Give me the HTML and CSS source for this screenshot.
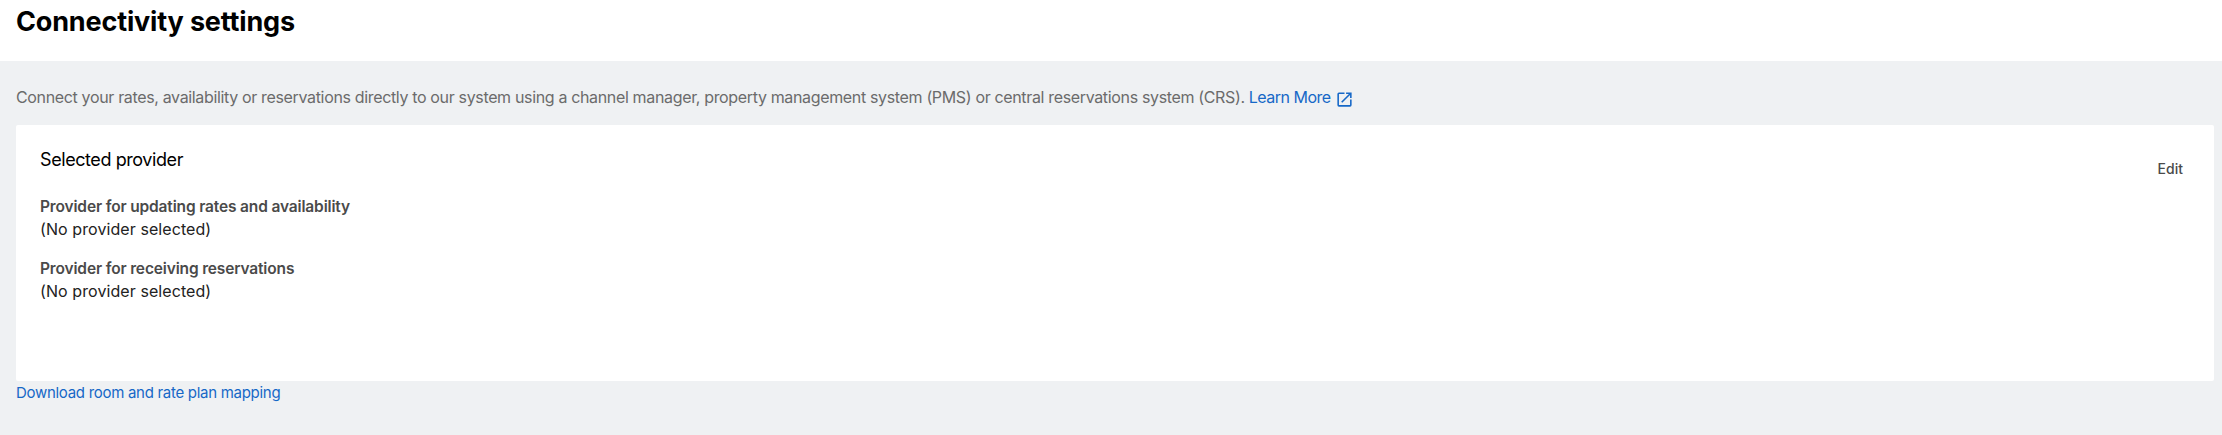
FILE: index.html
```html
<!DOCTYPE html>
<html lang="en">
<head>
    <meta charset="UTF-8">
    <meta name="viewport" content="width=device-width, initial-scale=1.0">
    <title>Connectivity settings</title>
    <link rel="stylesheet" href="styles.css">
</head>
<body>
    <header class="page-header">
        <h1>Connectivity settings</h1>
    </header>
    <main class="content">
        <p class="intro"><span class="intro-text">Connect your rates, availability or reservations directly to our system using a channel manager, property management system (PMS) or central reservations system (CRS).</span>
            <a class="learn-more" href="#">Learn More<svg class="icon" viewBox="0 0 24 24"><path fill="currentColor" d="M19 19H5V5h7V3H5a2 2 0 0 0-2 2v14a2 2 0 0 0 2 2h14a2 2 0 0 0 2-2v-7h-2v7zM14 3v2h3.59l-9.83 9.83 1.41 1.41L19 6.41V10h2V3h-7z"/></svg></a>
        </p>
        <section class="card">
            <div class="card-body">
                <h2>Selected provider</h2>
                <div class="provider">
                    <h3>Provider for updating rates and availability</h3>
                    <p>(No provider selected)</p>
                </div>
                <div class="provider">
                    <h3>Provider for receiving reservations</h3>
                    <p>(No provider selected)</p>
                </div>
            </div>
            <button class="edit">Edit</button>
        </section>
        <a class="download" href="#">Download room and rate plan mapping</a>
    </main>
</body>
</html>
```
FILE: styles.css
```css
* {
    box-sizing: border-box;
}
body {
    margin: 0;
    height: 435px;
    background: #eff1f3;
    font-family: Inter, sans-serif;
    color: #222;
    overflow: hidden;
}
h1, h2, h3, p {
    margin: 0;
}
a {
    color: #1668c7;
    text-decoration: none;
}
.page-header {
    height: 61px;
    padding: 5px 16px;
    background: #fff;
}
h1 {
    font-size: 27px;
    line-height: 34px;
    font-weight: 700;
    letter-spacing: -0.16px;
    color: #000;
}
.content {
    padding: 24px 8px 0 16px;
}
.intro {
    display: flex;
    gap: 4px;
    height: 40px;
    font-size: 16px;
    line-height: 24px;
    letter-spacing: -0.346px;
    color: #6b6b6b;
    white-space: nowrap;
}
.learn-more {
    display: flex;
    letter-spacing: -0.5px;
}
.icon {
    width: 19px;
    height: 19px;
    margin: 5px 0 0 4px;
}
.card {
    display: flex;
    justify-content: space-between;
    align-items: flex-start;
    height: 256px;
    padding: 24px;
    background: #fff;
    border-radius: 2px;
}
h2 {
    margin-bottom: 25px;
    font-size: 18px;
    line-height: 22px;
    font-weight: 400;
    letter-spacing: -0.42px;
    color: #000;
}
.provider {
    margin-bottom: 18px;
    font-size: 16px;
    line-height: 22px;
    letter-spacing: 0.08px;
}
h3 {
    font-size: 15.5px;
    line-height: 22px;
    font-weight: 600;
    letter-spacing: -0.15px;
    color: #4a4a4a;
}
.edit {
    margin: 10px 7px 0 0;
    padding: 0;
    border: 0;
    background: none;
    font: 500 14px/20px Inter, sans-serif;
    color: #4a4a4a;
}
.download {
    display: block;
    font-size: 15px;
    line-height: 24px;
    letter-spacing: -0.29px;
}
```
